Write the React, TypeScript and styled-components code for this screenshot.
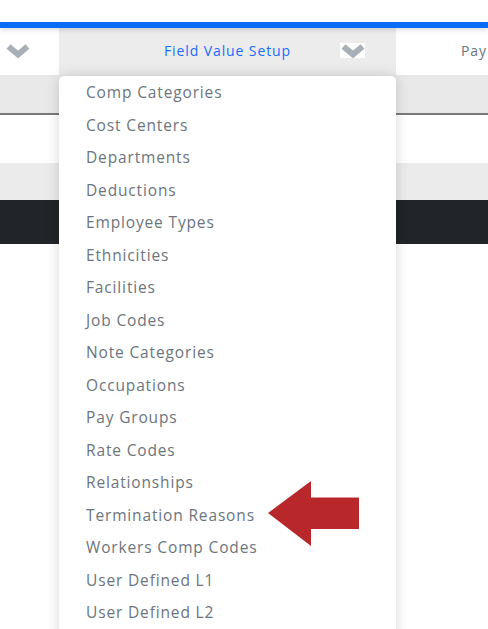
import React from "react";
import styled, { createGlobalStyle } from "styled-components";

const GlobalStyle = createGlobalStyle`
  html, body { margin: 0; padding: 0; background: #fff; }
  body { font-family: "Open Sans", "Liberation Sans", sans-serif; overflow: hidden; }
`;

const Page = styled.div`
  position: relative;
  width: 488px;
  height: 629px;
  overflow: hidden;
  background: #fff;
`;

const TopSpace = styled.div`
  height: 22px;
  background: #fff;
`;

const BlueBar = styled.div`
  position: relative;
  z-index: 2;
  height: 6px;
  background: #0b6cf8;
  box-shadow: 0 2px 5px rgba(0, 0, 0, 0.14);
`;

const NavRow = styled.div`
  display: grid;
  grid-template-columns: 59px 337px 1fr;
  height: 47px;
`;

const NavCell = styled.div<{ $active?: boolean }>`
  display: flex;
  align-items: center;
  background: ${(p) => (p.$active ? "#ececec" : "#fff")};
  font-size: 14px;
  letter-spacing: 0.9px;
  color: #6c757d;
  padding-bottom: 2px;
  box-sizing: border-box;
`;

const SideCell = styled(NavCell)`
  padding-left: 5px;
`;

const ActiveCell = styled(NavCell)`
  display: grid;
  grid-template-columns: 1fr auto 1fr;
  align-items: center;
`;

const ActiveLabel = styled.span`
  grid-column: 2;
  color: #1a6cff;
`;

const ChevronBox = styled.span<{ $boxed?: boolean }>`
  grid-column: 3;
  justify-self: end;
  display: flex;
  align-items: center;
  justify-content: center;
  width: 25px;
  height: 15px;
  margin-right: ${(p) => (p.$boxed ? "31px" : "0")};
  background: ${(p) => (p.$boxed ? "#fff" : "transparent")};
`;

const PayCell = styled(NavCell)`
  padding-left: 65px;
`;

const SubBar = styled.div`
  height: 38px;
  background: #e9e9e9;
  border-bottom: 2px solid #7a7a7a;
`;

const WhiteRow = styled.div`
  height: 48px;
  background: #fff;
`;

const GrayRow = styled.div`
  height: 37px;
  background: #ebebeb;
`;

const DarkRow = styled.div`
  height: 44px;
  background: #212428;
`;

const Dropdown = styled.ul`
  position: absolute;
  top: 76px;
  left: 59px;
  width: 337px;
  height: 580px;
  margin: 0;
  padding: 0;
  list-style: none;
  background: #fff;
  border-radius: 5px 5px 0 0;
  box-shadow: 0 0 14px rgba(0, 0, 0, 0.16);
  z-index: 3;
`;

const Item = styled.li`
  height: 32.5px;
  line-height: 32.5px;
  padding-left: 27px;
  font-size: 15.5px;
  letter-spacing: 0.85px;
  color: #6c757d;
  white-space: nowrap;
`;

const Arrow = styled.svg`
  position: absolute;
  left: 268px;
  top: 481px;
  z-index: 4;
`;

const Chevron = () => (
  <svg width="24" height="14" viewBox="0 0 24 14">
    <polyline
      points="2.5,2.5 12,10.5 21.5,2.5"
      fill="none"
      stroke="#a8afb7"
      strokeWidth="6"
      strokeLinejoin="miter"
    />
  </svg>
);

const items = [
  "Comp Categories",
  "Cost Centers",
  "Departments",
  "Deductions",
  "Employee Types",
  "Ethnicities",
  "Facilities",
  "Job Codes",
  "Note Categories",
  "Occupations",
  "Pay Groups",
  "Rate Codes",
  "Relationships",
  "Termination Reasons",
  "Workers Comp Codes",
  "User Defined L1",
  "User Defined L2",
];

export default function App() {
  return (
    <Page>
      <GlobalStyle />
      <TopSpace />
      <BlueBar />
      <NavRow>
        <SideCell>
          <ChevronBox>
            <Chevron />
          </ChevronBox>
        </SideCell>
        <ActiveCell $active>
          <ActiveLabel>Field Value Setup</ActiveLabel>
          <ChevronBox $boxed>
            <Chevron />
          </ChevronBox>
        </ActiveCell>
        <PayCell>Pay</PayCell>
      </NavRow>
      <SubBar />
      <WhiteRow />
      <GrayRow />
      <DarkRow />
      <Dropdown>
        {items.map((t) => (
          <Item key={t}>{t}</Item>
        ))}
      </Dropdown>
      <Arrow width="91" height="65" viewBox="0 0 91 65">
        <polygon points="0,32 43,0 43,16.5 91,16.5 91,48 43,48 43,65" fill="#b8282b" />
      </Arrow>
    </Page>
  );
}
